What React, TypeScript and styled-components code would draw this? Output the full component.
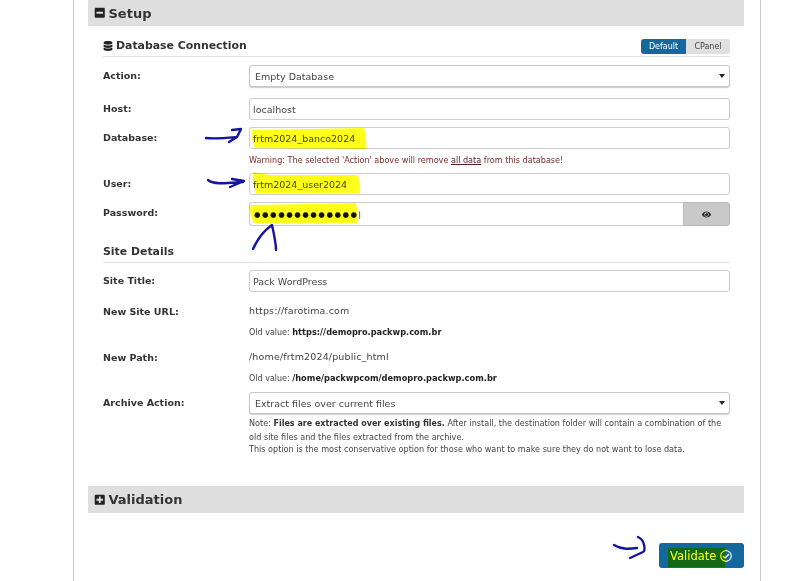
import React from "react";
import styled, { createGlobalStyle } from "styled-components";
import { FaDatabase, FaEye, FaMinusSquare, FaPlusSquare, FaRegCheckCircle } from "react-icons/fa";

const GlobalStyle = createGlobalStyle`
  html, body {
    margin: 0;
    height: 581px;
    overflow: hidden;
    background: #fff;
    font-family: "DejaVu Sans", Verdana, sans-serif;
    color: #333;
  }
`;

const Page = styled.div`
  position: relative;
  width: 800px;
  height: 581px;
  overflow: hidden;
`;

const Column = styled.div`
  box-sizing: border-box;
  width: 688px;
  height: 581px;
  margin-left: 73px;
  padding: 0 16px 0 14px;
  border-left: 1px solid #ccc;
  border-right: 1px solid #ccc;
`;

const PanelHeader = styled.div<{ $h: number }>`
  display: flex;
  align-items: center;
  gap: 3px;
  box-sizing: border-box;
  height: ${(p) => p.$h}px;
  padding-left: 6px;
  background: #dfdfdf;
  font-size: 13px;
  font-weight: 700;
  color: #333;
  svg {
    font-size: 11.5px;
    color: #222;
  }
`;

const Body = styled.div`
  padding: 0 14px 0 15px;
  height: 460px;
`;

const SectionHead = styled.div<{ $h: number }>`
  display: flex;
  align-items: flex-end;
  justify-content: space-between;
  box-sizing: border-box;
  height: ${(p) => p.$h}px;
  padding-bottom: 3px;
  border-bottom: 1px solid #e2e2e2;
`;

const SectionTitle = styled.div`
  display: flex;
  align-items: center;
  gap: 3px;
  font-size: 10.9px;
  line-height: 14px;
  font-weight: 700;
  color: #333;
  svg {
    font-size: 10px;
    color: #222;
  }
`;

const Toggle = styled.div`
  display: flex;
  height: 15px;
  margin-bottom: -1px;
  font-size: 8px;
  line-height: 15px;
`;

const ToggleBtn = styled.div<{ $active?: boolean }>`
  width: ${(p) => (p.$active ? 45 : 44)}px;
  text-align: center;
  border-radius: ${(p) => (p.$active ? "3px 0 0 3px" : "0 3px 3px 0")};
  background: ${(p) => (p.$active ? "#13699e" : "#e0e0e0")};
  color: ${(p) => (p.$active ? "#fff" : "#444")};
`;

const Row = styled.div<{ $top: number; $h?: number }>`
  display: grid;
  grid-template-columns: 146px 481px;
  margin-top: ${(p) => p.$top}px;
  min-height: ${(p) => p.$h ?? 22}px;
`;

const Label = styled.div`
  font-size: 9.5px;
  font-weight: 700;
  line-height: 21px;
  color: #333;
`;

const Field = styled.div<{ $h?: number }>`
  box-sizing: border-box;
  display: flex;
  align-items: center;
  height: ${(p) => p.$h ?? 22}px;
  padding-left: 3px;
  border: 1px solid #ccc;
  border-radius: 3px;
  background: #fff;
  font-size: 9.5px;
  color: #444;
`;

const SelectField = styled(Field)`
  position: relative;
  padding-left: 5px;
  border-color: #c8c8c8;
  box-shadow: 0 1px 1px #ccc;
  &::after {
    content: "";
    position: absolute;
    right: 4px;
    top: 8px;
    border: 3px solid transparent;
    border-top: 4px solid #222;
    border-bottom: 0;
  }
`;

const PasswordGroup = styled.div`
  display: flex;
  height: 24px;
`;

const PasswordField = styled(Field)`
  flex: 1;
  height: 24px;
  padding-left: 4px;
  border-radius: 3px 0 0 3px;
  border-right: 0;
  font-size: 7.5px;
  letter-spacing: 1.5px;
  color: #111;
`;

const EyeButton = styled.div`
  display: flex;
  align-items: center;
  justify-content: center;
  width: 45px;
  border: 1px solid #bbb;
  border-radius: 0 3px 3px 0;
  background: #c9c9c9;
  font-size: 9px;
  color: #222;
`;

const Note = styled.div<{ $top: number; $warn?: boolean }>`
  margin: ${(p) => p.$top}px 0 0 146px;
  font-size: 8.1px;
  line-height: 12.4px;
  color: ${(p) => (p.$warn ? "#7a2a2a" : "#444")};
  b {
    font-size: 8px;
    color: #333;
  }
  u {
    color: #5a1a1a;
  }
`;

const StaticValue = styled.div`
  font-size: 9.5px;
  letter-spacing: 0.15px;
  line-height: 20px;
  color: #444;
`;

const OldValue = styled.div`
  margin-top: 4px;
  font-size: 8px;
  line-height: 14px;
  color: #444;
  b {
    font-size: 8.25px;
    color: #222;
  }
`;

const Footer = styled.div`
  display: flex;
  justify-content: flex-end;
  margin-top: 30px;
`;

const ValidateBtn = styled.div`
  display: flex;
  align-items: center;
  gap: 4px;
  box-sizing: border-box;
  width: 85px;
  height: 25px;
  padding-left: 11px;
  border-radius: 3px;
  background: #13699e;
  font-size: 11.5px;
  color: #fff;
  svg {
    font-size: 12px;
    color: #fff;
  }
`;

const Annotations = styled.svg`
  position: absolute;
  left: 0;
  top: 0;
  pointer-events: none;
`;

const Marker = styled.path`
  fill: #ffff1a;
  mix-blend-mode: multiply;
`;

const Pen = styled.path`
  fill: none;
  stroke: #1414a0;
  stroke-width: 2.4;
  stroke-linecap: round;
  stroke-linejoin: round;
`;

export default function App() {
  return (
    <Page>
      <GlobalStyle />
      <Column>
        <PanelHeader $h={26}>
          <FaMinusSquare />
          Setup
        </PanelHeader>
        <Body>
          <SectionHead $h={31}>
            <SectionTitle>
              <FaDatabase />
              Database Connection
            </SectionTitle>
            <Toggle>
              <ToggleBtn $active>Default</ToggleBtn>
              <ToggleBtn>CPanel</ToggleBtn>
            </Toggle>
          </SectionHead>

          <Row $top={8}>
            <Label>Action:</Label>
            <SelectField>Empty Database</SelectField>
          </Row>
          <Row $top={11}>
            <Label>Host:</Label>
            <Field>localhost</Field>
          </Row>
          <Row $top={7}>
            <Label>Database:</Label>
            <Field>frtm2024_banco2024</Field>
          </Row>
          <Note $top={5} $warn>
            Warning: The selected 'Action' above will remove <u>all data</u> from this database!
          </Note>
          <Row $top={7}>
            <Label>User:</Label>
            <Field>frtm2024_user2024</Field>
          </Row>
          <Row $top={7} $h={24}>
            <Label>Password:</Label>
            <PasswordGroup>
              <PasswordField>●●●●●●●●●●●●●|</PasswordField>
              <EyeButton>
                <FaEye />
              </EyeButton>
            </PasswordGroup>
          </Row>

          <SectionHead $h={37}>
            <SectionTitle>Site Details</SectionTitle>
          </SectionHead>

          <Row $top={7}>
            <Label>Site Title:</Label>
            <Field>Pack WordPress</Field>
          </Row>
          <Row $top={9}>
            <Label>New Site URL:</Label>
            <div>
              <StaticValue>https://farotima.com</StaticValue>
              <OldValue>
                Old value: <b>https://demopro.packwp.com.br</b>
              </OldValue>
            </div>
          </Row>
          <Row $top={7}>
            <Label>New Path:</Label>
            <div>
              <StaticValue>/home/frtm2024/public_html</StaticValue>
              <OldValue>
                Old value: <b>/home/packwpcom/demopro.packwp.com.br</b>
              </OldValue>
            </div>
          </Row>
          <Row $top={6}>
            <Label>Archive Action:</Label>
            <SelectField>Extract files over current files</SelectField>
          </Row>
          <Note $top={3}>
            Note: <b>Files are extracted over existing files.</b> After install, the destination folder will
            contain a combination of the old site files and the files extracted from the archive.
            <br />
            This option is the most conservative option for those who want to make sure they do not want to
            lose data.
          </Note>
        </Body>
        <PanelHeader $h={27}>
          <FaPlusSquare />
          Validation
        </PanelHeader>
        <Footer>
          <ValidateBtn>
            Validate
            <FaRegCheckCircle />
          </ValidateBtn>
        </Footer>
      </Column>
      <Annotations width={800} height={581} viewBox="0 0 800 581">
        <Marker d="M252 130 L364 128 Q367 138 366 149 L255 148 Q251 140 252 130 Z" />
        <Marker d="M253 172 L270 175 L358 175 Q360 184 359 193 L256 193 Q252 182 253 172 Z" />
        <Marker d="M250 205 L356 203 Q358 213 357 223 L254 223 Q249 214 250 205 Z" />
        <Marker d="M668 548 L725 548 L725 567 L668 567 Z" />
        <Pen d="M206 138 C216 139 226 138 237 137 M232 130 L241 129 L237 137 L229 142" />
        <Pen d="M208 180 C214 185 228 183 243 182 M232 179 L244 181 L230 187" />
        <Pen d="M253 249 C257 240 262 232 272 225 C274 234 276 243 276 250" />
        <Pen d="M614 545 C622 550 630 549 637 548 M638 537 C646 541 645 551 643 552 L630 558" />
      </Annotations>
    </Page>
  );
}
